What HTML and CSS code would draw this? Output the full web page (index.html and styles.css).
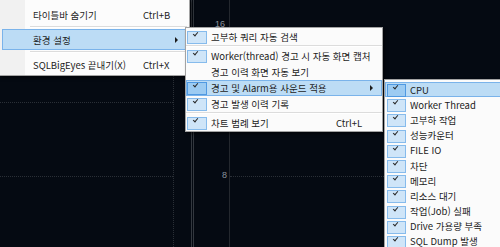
FILE: index.html
```html
<!DOCTYPE html>
<html lang="ko">

<head>
    <meta charset="UTF-8">
    <title>SQLBigEyes - 메뉴</title>
    <link rel="stylesheet" href="styles.css">
</head>

<body>
    <div class="screen">
        <!-- 차트 배경 -->
        <div class="chart">
            <div class="grid-v dotted" style="left:173px"></div>
            <div class="grid-v solid" style="left:191px"></div>
            <div class="grid-v solid" style="left:193px"></div>
            <div class="grid-v axis" style="left:229px"></div>
            <div class="grid-h left" style="top:102px"></div>
            <div class="grid-h left" style="top:176px"></div>
            <div class="grid-h right" style="top:176px"></div>
            <span class="axis-label" style="left:215px; top:19px">16</span>
            <span class="axis-label" style="left:222px; top:170px">8</span>
        </div>

        <!-- 메인 메뉴 -->
        <div class="menu menu-main">
            <div class="item"><span class="label">타이틀바 숨기기</span><span class="key">Ctrl+B</span></div>
            <div class="sep"></div>
            <div class="item active"><span class="label">환경 설정</span><span class="arrow"></span></div>
            <div class="sep"></div>
            <div class="item"><span class="label">SQLBigEyes 끝내기(X)</span><span class="key">Ctrl+X</span></div>
        </div>

        <!-- 환경 설정 -->
        <div class="menu menu-env">
            <div class="item checked"><span class="box"></span><span class="label">고부하 쿼리 자동 검색</span></div>
            <div class="sep"></div>
            <div class="item checked"><span class="box"></span><span class="label">Worker(thread) 경고 시 자동 화면 캡처</span></div>
            <div class="item"><span class="box"></span><span class="label">경고 이력 화면 자동 보기</span></div>
            <div class="item checked active"><span class="box"></span><span class="label">경고 및 Alarm용 사운드 적용</span><span class="arrow"></span></div>
            <div class="item checked"><span class="box"></span><span class="label">경고 발생 이력 기록</span></div>
            <div class="sep"></div>
            <div class="item checked"><span class="box"></span><span class="label">차트 범례 보기</span><span class="key">Ctrl+L</span></div>
        </div>

        <!-- 사운드 적용 -->
        <div class="menu menu-sound">
            <div class="item checked active"><span class="box"></span><span class="label">CPU</span></div>
            <div class="item checked"><span class="box"></span><span class="label">Worker Thread</span></div>
            <div class="item checked"><span class="box"></span><span class="label">고부하 작업</span></div>
            <div class="item checked"><span class="box"></span><span class="label">성능카운터</span></div>
            <div class="item checked"><span class="box"></span><span class="label">FILE IO</span></div>
            <div class="item checked"><span class="box"></span><span class="label">차단</span></div>
            <div class="item checked"><span class="box"></span><span class="label">메모리</span></div>
            <div class="item checked"><span class="box"></span><span class="label">리소스 대기</span></div>
            <div class="item checked"><span class="box"></span><span class="label">작업(Job) 실패</span></div>
            <div class="item checked"><span class="box"></span><span class="label">Drive 가용량 부족</span></div>
            <div class="item checked"><span class="box"></span><span class="label">SQL Dump 발생</span></div>
        </div>
    </div>
</body>

</html>
```

FILE: styles.css
```css
/* 기본 */
body {
    margin: 0;
    background-color: #050a12;
    font-family: "Noto Sans CJK KR", "Noto Sans", sans-serif;
    font-size: 9.5px;
    color: #1c1c1c;
}

.screen {
    position: relative;
    width: 500px;
    height: 247px;
    overflow: hidden;
    background-color: #050a12;
}

/* 차트 배경 */
.chart {
    position: absolute;
    inset: 0;
}

.grid-v {
    position: absolute;
    top: 0;
    bottom: 0;
    width: 1px;
}

.grid-v.dotted {
    border-left: 1px dotted #2a2f36;
    width: 0;
}

.grid-v.solid {
    background-color: #33383f;
}

.grid-v.axis {
    background-color: #24282e;
}

.grid-h {
    position: absolute;
    height: 0;
    border-top: 1px dotted #2a2f36;
}

.grid-h.left {
    left: 0;
    width: 173px;
}

.grid-h.right {
    left: 230px;
    right: 0;
}

.axis-label {
    position: absolute;
    font-family: "Liberation Sans", sans-serif;
    font-size: 9px;
    color: #8a929c;
}

/* 메뉴 공통 */
.menu {
    position: absolute;
    display: flex;
    flex-direction: column;
    background-color: #fbfbfb;
    border: 1px solid #a3a3a3;
    box-shadow: 2px 2px 3px rgba(0, 0, 0, 0.5);
}

.item {
    position: relative;
    display: flex;
    align-items: center;
    box-sizing: border-box;
    border: 1px solid transparent;
    white-space: nowrap;
}

.item.active {
    background-color: #bcdcf5;
    border-color: #7ab3ea;
}

.label {
    flex: 1;
}

.key {
    flex: none;
}

.arrow {
    width: 0;
    height: 0;
    border-top: 3px solid transparent;
    border-bottom: 3px solid transparent;
    border-left: 3px solid #1c1c1c;
}

.sep {
    height: 1px;
    background-color: #dcdcdc;
    border-bottom: 1px solid #ffffff;
}

/* 체크 박스 */
.box {
    flex: none;
    position: relative;
    box-sizing: border-box;
    align-self: flex-start;
    margin-top: 1px;
}

.checked .box {
    background-color: #cfe5f8;
    border: 1px solid #86bbec;
}

.checked.active .box {
    background-color: #9ccbf2;
    border-color: #4f99e2;
}

.checked .box::after {
    content: "";
    position: absolute;
    left: 5px;
    top: 0;
    width: 4px;
    height: 2px;
    border-left: 1.3px solid #2a2a2a;
    border-bottom: 1.3px solid #2a2a2a;
    transform: rotate(-50deg);
    transform-origin: center;
}

/* 메인 메뉴 */
.menu-main {
    left: -1px;
    top: -1px;
    width: 185px;
    padding: 4px 2px 0 2px;
    background: linear-gradient(to right, #f1f1f1 25px, #fcfcfc 25px);
    z-index: 1;
}

.menu-main .item {
    height: 21px;
    padding-left: 30px;
    padding-right: 8px;
}

.menu-main .key {
    width: 35px;
}

.menu-main .sep {
    margin: 1px 0 1px 28px;
}

/* 환경 설정 */
.menu-env {
    left: 185px;
    top: 27px;
    width: 196px;
    padding: 1px 0 0 0;
    z-index: 2;
}

.menu-env .item {
    height: 16px;
    padding-right: 8px;
}

.menu-env .box {
    width: 20px;
    height: 13px;
    margin-right: 4px;
}

.menu-env .key {
    width: 37px;
}

.menu-env .sep {
    margin: 0 0 1px 0;
}

/* 사운드 적용 */
.menu-sound {
    left: 384px;
    top: 79px;
    width: 130px;
    padding: 2px 0 0 0;
    z-index: 3;
}

.menu-sound .item {
    height: 15.2px;
    padding-left: 1px;
}

.menu-sound .box {
    width: 19px;
    height: 13px;
    margin-right: 4px;
}
```
